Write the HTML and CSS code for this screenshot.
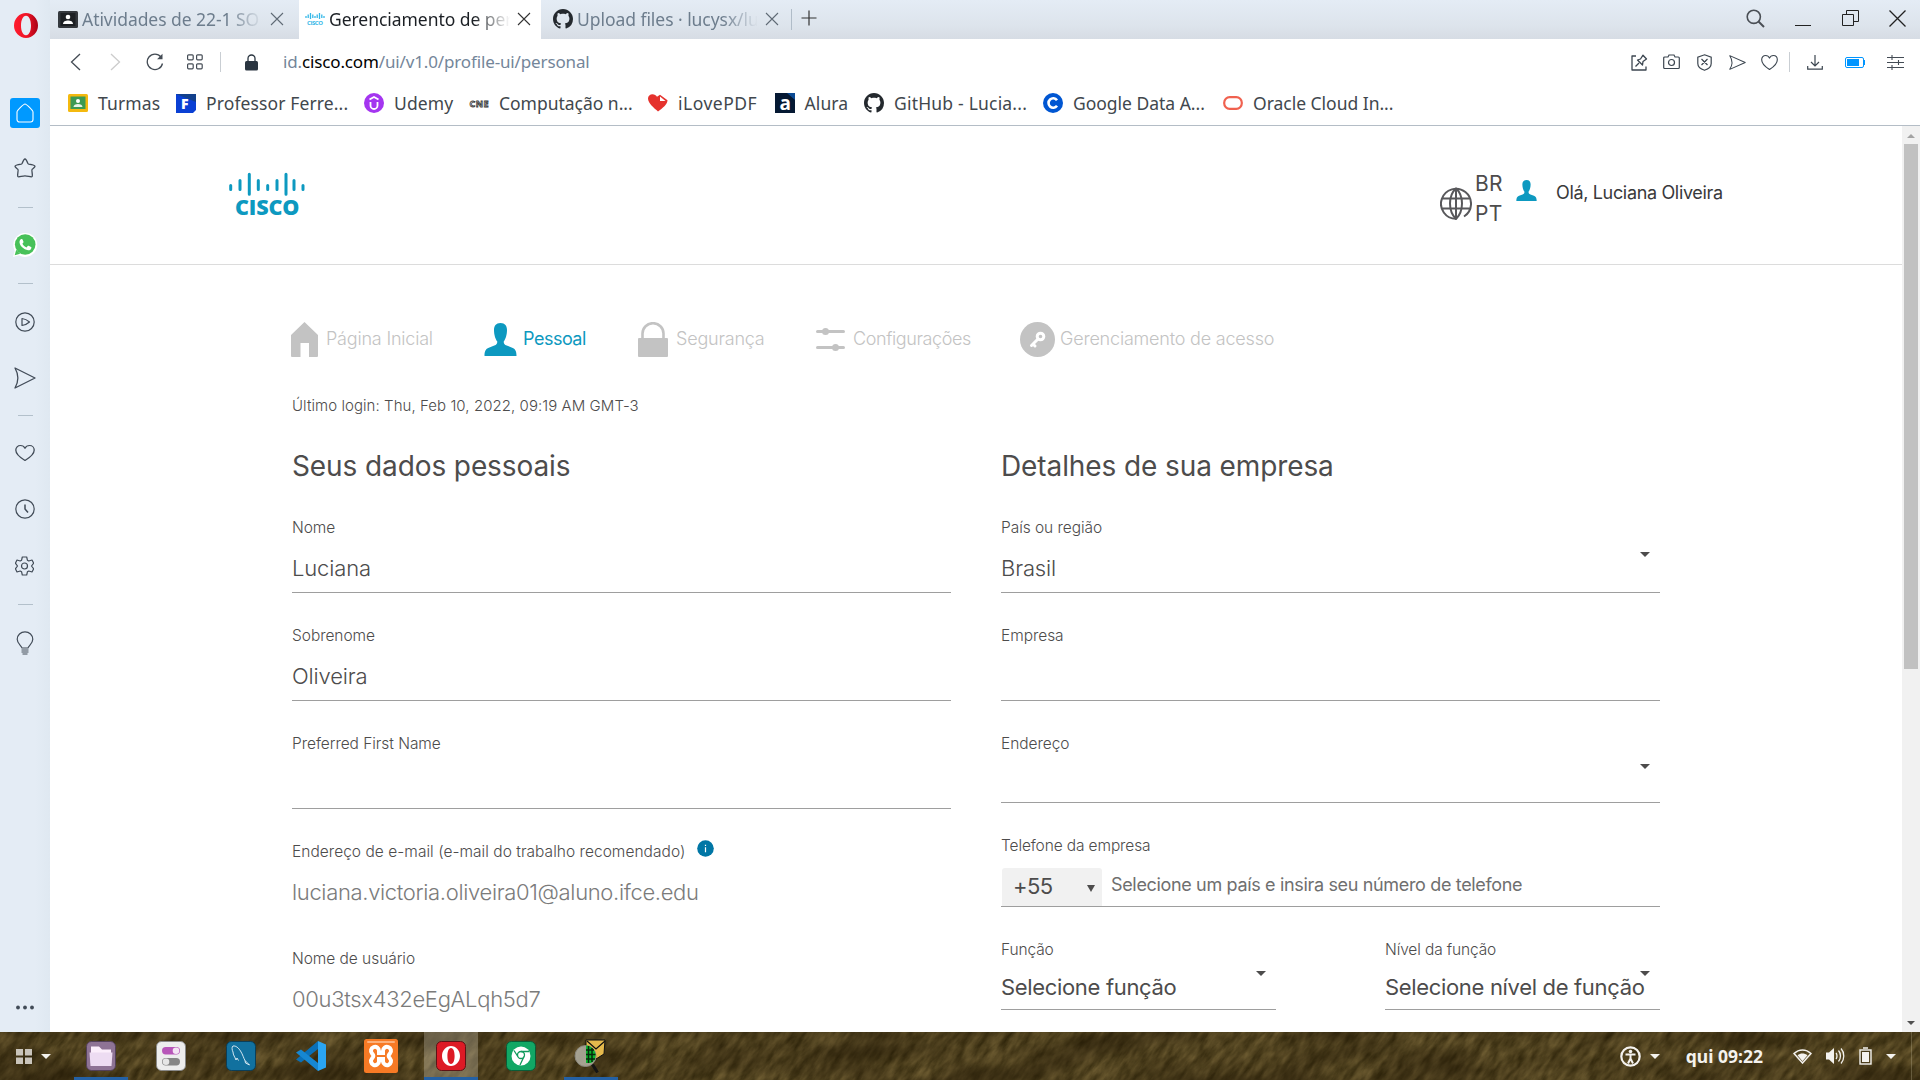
FILE: index.html
```html
<!DOCTYPE html>
<html lang="pt-BR">
<head>
<meta charset="utf-8">
<title>Gerenciamento de perfil</title>
<link rel="stylesheet" href="styles.css">
</head>
<body>
<svg class="defs" width="0" height="0">
  <defs>
    <symbol id="github" viewBox="0 0 16 16"><path d="M8 0C3.58 0 0 3.58 0 8c0 3.54 2.29 6.53 5.47 7.59.4.07.55-.17.55-.38 0-.19-.01-.82-.01-1.49-2.01.37-2.53-.49-2.69-.94-.09-.23-.48-.94-.82-1.13-.28-.15-.68-.52-.01-.53.63-.01 1.08.58 1.23.82.72 1.21 1.87.87 2.33.66.07-.52.28-.87.51-1.07-1.78-.2-3.64-.89-3.64-3.95 0-.87.31-1.59.82-2.15-.08-.2-.36-1.02.08-2.12 0 0 .67-.21 2.2.82.64-.18 1.32-.27 2-.27s1.36.09 2 .27c1.53-1.04 2.2-.82 2.2-.82.44 1.1.16 1.92.08 2.12.51.56.82 1.27.82 2.15 0 3.07-1.87 3.75-3.65 3.95.29.25.54.73.54 1.48 0 1.07-.01 1.93-.01 2.2 0 .21.15.46.55.38A8.01 8.01 0 0 0 16 8c0-4.42-3.58-8-8-8z" fill="#24292e"/></symbol>
    <symbol id="person" viewBox="0 0 32 33"><path d="M16 0c4.600 0 6.500 3.200 6.500 7 0 5-1.600 9.500-3.300 11.500 0 2.200.8 3.300 3 4.100l5.500 2.100c3 1.200 4.300 3.300 4.300 8.300H0c0-5 1.300-7.100 4.300-8.300l5.500-2.100c2.200-.8 3-1.900 3-4.100C11.100 16.500 9.500 12 9.500 7 9.500 3.200 11.400 0 16 0z" fill="#0d99c0"/></symbol>
    <symbol id="close" viewBox="0 0 14 14"><path d="M1 1l12 12M13 1L1 13" fill="none" stroke="currentColor" stroke-width="1.100"/></symbol>
    <symbol id="heart" viewBox="0 0 20 20"><path d="M10 18.200C6.500 16 .8 11.500.8 6.700.8 3.800 2.800 1.700 5.400 1.700c2 0 3.700 1 4.600 3.100.9-2.100 2.600-3.100 4.600-3.100 2.600 0 4.600 2.100 4.600 5 0 4.800-5.700 9.300-9.200 11.500z" fill="none" stroke="currentColor" stroke-width="1.300" stroke-linejoin="round"/></symbol>
    <symbol id="send" viewBox="0 0 22 22"><path d="M1 1l20 10L1 21c4-7 4-13 0-20z" fill="none" stroke="currentColor" stroke-width="1.300" stroke-linejoin="round"/></symbol>
    <symbol id="down" viewBox="0 0 10 5"><path d="M0 0h10L5 5z" fill="currentColor"/></symbol>
  </defs>
</svg>

<div class="window">
  <aside class="side">
    <svg class="opera" width="24" height="25" viewBox="0 0 24 25"><defs><linearGradient id="og" x1="0" x2="1"><stop offset="0" stop-color="#ff1b2d"/><stop offset=".55" stop-color="#ee1427"/><stop offset="1" stop-color="#a70014"/></linearGradient></defs><path fill="url(#og)" fill-rule="evenodd" d="M12 0a12 12.500 0 1 0 0 25a12 12.500 0 1 0 0-25zM12 2.700c3.200 0 5 4.600 5 9.800s-1.800 9.800-5 9.800-5-4.600-5-9.800 1.800-9.800 5-9.800z"/></svg>
    <div class="home"><svg width="18" height="20" viewBox="0 0 18 20"><path d="M9 1C7.600 1 1 7.500 1 9v7.500A2.500 2.500 0 0 0 3.500 19h11a2.500 2.500 0 0 0 2.500-2.500V9c0-1.500-6.600-8-8-8z" fill="none" stroke="#fff" stroke-width="1.100"/></svg></div>
    <div class="s-item s-25"><svg width="22" height="21" viewBox="0 0 22 21"><path d="M11 1c.9 0 1.500.8 2.800 4.300.2.500.5.700 1 .8C19 6.700 21 7.100 21 8.300c0 1.100-2.300 2.300-3 3.200-.6.700.9 5.500.2 7-.7 1.100-4.200-.6-7.200-.6s-6.500 1.700-7.200.6c-.7-1.500.8-6.300.2-7-.7-.9-3-2.100-3-3.200 0-1.200 2-1.600 6.200-2.200.5-.1.800-.3 1-.8C9.500 1.800 10.100 1 11 1z" fill="none" stroke="currentColor" stroke-width="1.300"/></svg></div>
    <hr class="s-24">
    <div class="s-item s-22"><svg width="26" height="26" viewBox="0 0 26 26"><path d="M1 25l1.700-6.300A12 12 0 1 1 7.200 23.300z" fill="#fff"/><circle cx="13.200" cy="12.500" r="10.300" fill="#47c159"/><path d="M2.700 23.300l1.500-5.600 4 4.100z" fill="#47c159"/><path d="M9.500 7c.5 0 .8 0 1 .5l1 2.300c.1.400 0 .7-.3 1l-.8.900c1 1.800 2.300 2.900 4.100 3.700l1.200-1.400c.3-.3.600-.3 1-.2l2.300 1.100c.4.200.5.500.4.900-.3 2-1.900 2.700-3.300 2.500-4.400-.7-8.300-4.500-8.600-8C7.400 8.600 8.500 7 9.500 7z" fill="#fff"/></svg></div>
    <hr class="s-23">
    <div class="s-item s-23"><svg width="20" height="20" viewBox="0 0 20 20" fill="none" stroke="currentColor" stroke-width="1.200"><circle cx="10" cy="10" r="9.200"/><path d="M7 6.500v7c2.500-.3 5-1.300 7.500-3.500C12 7.800 9.500 6.800 7 6.500z" stroke-linejoin="round"/></svg></div>
    <div class="s-item s-26"><svg width="22" height="22"><use href="#send"/></svg></div>
    <hr class="s-22">
    <div class="s-item s-22"><svg width="20" height="18" viewBox="0 0 20 20" preserveAspectRatio="none"><use href="#heart" width="20" height="20"/></svg></div>
    <div class="s-item s-26"><svg width="20" height="20" viewBox="0 0 20 20" fill="none" stroke="currentColor" stroke-width="1.200"><circle cx="10" cy="10" r="9.200"/><path d="M10 5.500V10l3 3.500" stroke-width="1.500"/></svg></div>
    <div class="s-item s-27"><svg width="19" height="20" viewBox="0 0 19 20" fill="none" stroke="currentColor" stroke-width="1.200"><circle cx="9.500" cy="10" r="3"/><path stroke-linejoin="round" d="M7.300 1h4.400l.7 3.200 1.400.8 3.200-1 1.700 3.200L16.500 10l2.200 2.800L17 16l-3.200-1-1.400.8-.7 3.200H7.300l-.7-3.200-1.400-.8L2 16 .4 12.800 2.500 10 .4 7.200 2 4l3.200 1 1.400-.8z"/></svg></div>
    <hr class="s-23">
    <div class="s-item s-23"><svg width="18" height="24" viewBox="0 0 18 24" fill="none" stroke="currentColor" stroke-width="1.200"><path d="M6 17c-.4-2.300-4.800-4.200-4.800-8.800a7.800 7.400 0 0 1 15.600 0c0 4.600-4.400 6.500-4.800 8.800z"/><path d="M5.500 19h7M5.500 21h7M6.500 23h5"/></svg></div>
    <svg class="dots" width="18" height="5" viewBox="0 0 18 5" fill="#414b57"><circle cx="2" cy="2.500" r="1.900"/><circle cx="9" cy="2.500" r="1.900"/><circle cx="16" cy="2.500" r="1.900"/></svg>
  </aside>

  <div class="browser">
    <div class="tabs">
      <div class="tab tab-first">
        <svg width="20" height="17" viewBox="0 0 20 17"><rect width="20" height="17" rx="1.500" fill="#34383d"/><rect x="2.500" y="2" width="15" height="13" fill="#1d2024"/><circle cx="10" cy="6" r="2.300" fill="#fff"/><path d="M5 13c0-2.500 2.500-3.500 5-3.500s5 1 5 3.500z" fill="#fff"/></svg>
        <span class="tab-text fade">Atividades de 22-1 SO 2022</span><svg class="x" width="14" height="14"><use href="#close"/></svg>
      </div>
      <div class="tab tab-active">
        <svg width="20" height="12" viewBox="0 0 20 12"><g stroke="#35b8e8" stroke-width="1.300"><path d="M1 3v2M3.200 1.500v3.500M5.500 0v6M7.800 1.500v3.500M10 3v2M12.200 1.500v3.500M14.500 0v6M16.800 1.500v3.500M19 3v2"/></g><text x="2" y="12" class="mini-cisco" textLength="16">CISCO</text></svg>
        <span class="tab-text fade">Gerenciamento de perfil</span><svg class="x" width="14" height="14"><use href="#close"/></svg>
      </div>
      <div class="tab tab-last">
        <svg width="20" height="20"><use href="#github"/></svg>
        <span class="tab-text fade">Upload files · lucysx/lucysx</span><svg class="x" width="14" height="14"><use href="#close"/></svg>
      </div>
      <span class="tab-sep"></span>
      <svg class="plus" width="16" height="16" viewBox="0 0 16 16"><path d="M8 .5v15M.5 8h15" stroke="#333" stroke-width="1.200"/></svg>
      <div class="win-ctl">
        <svg width="19" height="19" viewBox="0 0 19 19" fill="none" stroke="#4a4f55" stroke-width="1.600"><circle cx="7.800" cy="7.800" r="6.600"/><path d="M12.500 12.500l5.500 5.500" stroke-width="2"/></svg>
        <svg width="16" height="16" viewBox="0 0 16 16"><path d="M0 15.500h16" stroke="#222"/></svg>
        <svg width="17" height="17" viewBox="0 0 17 17" fill="none" stroke="#222"><path d="M.5 4.500h11v11H.5zM4.500 4.500v-4h12v11h-5"/></svg>
        <svg width="17" height="17" viewBox="0 0 17 17"><path d="M.5 .5l16 16M16.500 .5l-16 16" stroke="#222" stroke-width="1.300"/></svg>
      </div>
    </div>

    <div class="toolbar">
      <div class="cell40"><svg width="11" height="18" viewBox="0 0 11 18"><path d="M10 1L1.500 9l8.500 8" fill="none" stroke="#444c55" stroke-width="1.300"/></svg></div>
      <div class="cell40"><svg width="11" height="18" viewBox="0 0 11 18"><path d="M1 1l8.500 8L1 17" fill="none" stroke="#ccc" stroke-width="1.300"/></svg></div>
      <div class="cell40"><svg width="18" height="18" viewBox="0 0 18 18"><path d="M15 4A7.700 7.700 0 1 0 16.500 10.500" fill="none" stroke="#444c55" stroke-width="1.300"/><path d="M16.500 .8v5.400h-5.400z" fill="#444c55"/></svg></div>
      <div class="cell40"><svg width="16" height="16" viewBox="0 0 16 16" fill="none" stroke="#444c55" stroke-width="1.200"><rect x=".6" y=".8" width="5.600" height="5" rx="1"/><rect x="9.600" y=".8" width="5.600" height="5" rx="1"/><rect x=".6" y="9.800" width="5.600" height="5" rx="1"/><rect x="9.600" y="9.800" width="5.600" height="5" rx="1"/></svg></div>
      <span class="bar-sep"></span>
      <svg class="lock" width="13" height="17" viewBox="0 0 13 17"><rect y="7" width="13" height="9.500" rx="1.500" fill="#2a3540"/><path d="M3 8V4.500a3.500 3.500 0 0 1 7 0V8" fill="none" stroke="#2a3540" stroke-width="1.300"/></svg>
      <div class="url">id.<b>cisco.com</b>/ui/v1.0/profile-ui/personal</div>
      <div class="cell33"><svg width="17" height="17" viewBox="0 0 17 17" fill="none" stroke="currentColor" stroke-width="1.300"><path d="M5 2H1v14h14v-3.500M4.500 12.500L8 9M6.500 6l5 5 .5-3.500L15.500 5 12 1.200 9.500 5z" stroke-linejoin="round"/></svg></div>
      <div class="cell33"><svg width="17" height="16" viewBox="0 0 17 16" fill="none" stroke="currentColor" stroke-width="1.200"><path d="M1.700 3H5l1-2h5l1 2h3.300a1 1 0 0 1 1 1v9.500a1 1 0 0 1-1 1H1.700a1 1 0 0 1-1-1V4a1 1 0 0 1 1-1z"/><circle cx="8.500" cy="8.500" r="3"/></svg></div>
      <div class="cell33"><svg width="15" height="17" viewBox="0 0 15 17" fill="none" stroke="currentColor" stroke-width="1.200"><path d="M7.500.8l6.700 2.400v6.300c0 3.500-3.500 5.800-6.700 6.800C4.300 15.300.8 13 .8 9.500V3.200zM4.500 5l6 6M10.500 5l-6 6"/></svg></div>
      <div class="cell33"><svg width="17" height="15" viewBox="0 0 22 22" preserveAspectRatio="none"><use href="#send" width="22" height="22"/></svg></div>
      <div class="cell33"><svg width="17" height="17"><use href="#heart"/></svg></div>
      <span class="bar-sep2"></span>
      <div class="cell33 dl"><svg width="16" height="15" viewBox="0 0 16 15" fill="none" stroke="currentColor" stroke-width="1.200"><path d="M8 0v11M4 7l4 4 4-4M.7 11v3.200h14.600V11"/></svg></div>
      <div class="cell40 bat"><svg width="20" height="11" viewBox="0 0 20 11"><rect x=".5" y=".5" width="18" height="10" rx="1.500" fill="#fff" stroke="#0095ff"/><rect x="2" y="2" width="12" height="7" fill="#0095ff"/><rect x="18" y="3" width="2" height="5" fill="#0095ff"/></svg></div>
      <div class="cell40"><svg width="17" height="15" viewBox="0 0 17 15" stroke="#444c55" stroke-width="1.100"><path d="M0 2.500h17M0 7.500h17M0 12.500h17M5 0v5M11.500 5v5M5 10v5"/></svg></div>
    </div>

    <div class="bookmarks">
      <div class="bm"><svg width="20" height="18" viewBox="0 0 20 18"><rect width="20" height="18" rx="1.500" fill="#f4b90f"/><rect x="2.500" y="2.500" width="15" height="12.500" fill="#3c9a53"/><circle cx="10" cy="7" r="2" fill="#fff"/><path d="M5.500 13c0-2 2-3 4.500-3s4.500 1 4.500 3z" fill="#e6f3e8"/></svg>Turmas</div>
      <div class="bm"><svg width="20" height="19" viewBox="0 0 20 19"><path d="M0 0h20v16l-3 3H0z" fill="#0a40d4"/><path d="M0 0h20v8z" fill="#12408c"/><text x="5" y="15" class="f-logo">F</text></svg>Professor Ferre...</div>
      <div class="bm"><svg width="20" height="20" viewBox="0 0 20 20"><circle cx="10" cy="10" r="10" fill="#a435f0"/><path d="M6.500 9v3.500a3.500 3.500 0 0 0 7 0V9M5.500 6.500L10 4l4.500 2.500" fill="none" stroke="#fff" stroke-width="1.800"/></svg>Udemy</div>
      <div class="bm bm-tight"><svg width="20" height="10" viewBox="0 0 20 10"><text x="0.500" y="8.700" class="cne-logo" textLength="19">CNE</text></svg>Computação n...</div>
      <div class="bm bm-wide"><svg width="20" height="18" viewBox="0 0 20 18"><path d="M10 17.500C6 14 0 9 0 4.500 0 2 2 .3 4.500.3c2 0 3.500 1 4.500 2.500l3-2 7.500 5.500c0 4-5 8-9.500 11.200z" fill="#e5322d"/><path d="M12 2.500V7h5.500z" fill="#fff"/></svg>iLovePDF</div>
      <div class="bm"><svg width="20" height="20" viewBox="0 0 20 20"><rect width="20" height="20" fill="#051933"/><path d="M12 0h8v7z" fill="#0b4a94"/><text x="4.500" y="16.500" class="a-logo">a</text></svg>Alura</div>
      <div class="bm bm-git"><svg width="20" height="20"><use href="#github"/></svg>GitHub - Lucia...</div>
      <div class="bm bm-tight"><svg width="20" height="20" viewBox="0 0 20 20"><circle cx="10" cy="10" r="10" fill="#0056d2"/><path d="M14 7.200a4.700 4.700 0 1 0 0 5.600" fill="none" stroke="#fff" stroke-width="2.600"/></svg>Google Data A...</div>
      <div class="bm bm-tight"><svg width="20" height="14" viewBox="0 0 20 14"><rect x="1.200" y="1.200" width="17.600" height="11.600" rx="5.500" fill="none" stroke="#f0614f" stroke-width="2.200"/></svg>Oracle Cloud In...</div>
    </div>

    <div class="view">
      <main class="page">
        <header class="top">
          <svg class="cisco" width="78" height="46" viewBox="0 0 78 46"><g stroke="#0d99c0" stroke-width="3" stroke-linecap="round"><path d="M2.700 13.500v4M12 8.500v9M21.300 2.200v20M30.300 8.500v9M39.700 13.500v4M49 8.500v9M58 2.200v20M66 8.500v9M75 13.500v4"/></g><text x="7" y="43.300" class="cisco-name" textLength="64.500">CISCO</text></svg>
          <div class="lang"><svg width="32" height="33" viewBox="0 0 32 33" fill="none" stroke="#58585b" stroke-width="2"><path d="M24 29.500a15 15 0 1 0-8 2.300M2.500 11.500h27M2.500 21.500h27"/><path d="M16 32c-4-4-6-10-6-15.500S12 5 16 1.500c4 3.500 6 9.500 6 15S20 28 16 32zM16 1.500V32"/></svg><span>BR<br>PT</span></div>
          <svg class="me" width="21" height="21"><use href="#person"/></svg>
          <span class="hello">Olá, Luciana Oliveira</span>
        </header>
        <div class="body">
          <nav class="nav">
            <a><svg width="27" height="35" viewBox="0 0 27 35"><path d="M13.500 0L27 13v21a1 1 0 0 1-1 1h-8V21H9.500v14H1a1 1 0 0 1-1-1V13z" fill="#c3c3c3"/></svg><span>Página Inicial</span></a>
            <a class="on"><svg width="33" height="33"><use href="#person"/></svg><span>Pessoal</span></a>
            <a><svg width="30" height="35" viewBox="0 0 30 35"><rect y="16" width="30" height="19" rx="1" fill="#c3c3c3"/><path d="M4.500 17V11.500a10.500 10.300 0 0 1 21 0V17" fill="none" stroke="#c3c3c3" stroke-width="2.600"/></svg><span>Segurança</span></a>
            <a><svg width="29" height="23" viewBox="0 0 29 23"><path d="M1.500 3.500h26M1.500 19.500h26" stroke="#c3c3c3" stroke-width="3" stroke-linecap="round"/><circle cx="9.500" cy="3.500" r="3.500" fill="#c3c3c3"/><circle cx="19.500" cy="19.500" r="3.500" fill="#c3c3c3"/></svg><span class="cfg">Configurações</span></a>
            <a><svg width="35" height="35" viewBox="0 0 35 35"><circle cx="17.500" cy="17.500" r="17.500" fill="#c3c3c3"/><circle cx="20.500" cy="14.500" r="3.300" fill="none" stroke="#fff" stroke-width="3"/><path d="M17.500 17.500l-6 6M13 22l2 2" stroke="#fff" stroke-width="3" stroke-linecap="round"/></svg><span>Gerenciamento de acesso</span></a>
          </nav>
          <p class="login">Último login: Thu, Feb 10, 2022, 09:19 AM GMT-3</p>
          <div class="cols">
            <section class="col">
              <h2>Seus dados pessoais</h2>
              <div class="field"><label>Nome</label><div class="val">Luciana</div></div>
              <div class="field"><label>Sobrenome</label><div class="val">Oliveira</div></div>
              <div class="field"><label>Preferred First Name</label></div>
              <div class="field ro"><label class="mail-label">Endereço de e-mail (e-mail do trabalho recomendado)<svg width="17" height="17" viewBox="0 0 17 17"><circle cx="8.500" cy="8.500" r="8.300" fill="#0076a5"/><path d="M8.500 7.200v5M8.500 4.700v1.300" stroke="#fff" stroke-width="1.200"/></svg></label><div class="val mail">luciana.victoria.oliveira01@aluno.ifce.edu.br</div></div>
              <div class="field ro"><label>Nome de usuário</label><div class="val user">00u3tsx432eEgALqh5d7</div></div>
            </section>
            <section class="col">
              <h2>Detalhes de sua empresa</h2>
              <div class="field"><label>País ou região</label><div class="val">Brasil</div><svg class="caret" width="10" height="5"><use href="#down"/></svg></div>
              <div class="field"><label>Empresa</label></div>
              <div class="field addr"><label>Endereço</label><svg class="caret low" width="10" height="5"><use href="#down"/></svg></div>
              <div class="phone"><label>Telefone da empresa</label><div class="phone-row"><div class="ddi"><span>+55</span><svg width="8" height="7" viewBox="0 0 8 7"><path d="M0 0h8L4 7z" fill="#4d4c4c"/></svg></div><span class="ph">Selecione um país e insira seu número de telefone</span></div></div>
              <div class="pair">
                <div class="field sel"><label>Função</label><div class="val">Selecione função</div><svg class="caret up" width="10" height="5"><use href="#down"/></svg></div>
                <div class="field sel"><label>Nível da função</label><div class="val">Selecione nível de função</div><svg class="caret up" width="10" height="5"><use href="#down"/></svg></div>
              </div>
            </section>
          </div>
        </div>
      </main>
      <div class="scroll">
        <svg class="flip" width="8" height="4" viewBox="0 0 10 5"><use href="#down" width="10" height="5"/></svg>
        <div class="thumb"></div>
        <svg class="sc-down" width="8" height="4" viewBox="0 0 10 5"><use href="#down" width="10" height="5"/></svg>
      </div>
    </div>
  </div>
</div>

<footer class="task">
  <svg class="grass" width="1920" height="48"><filter id="gr" x="0" y="0" width="100%" height="100%" color-interpolation-filters="sRGB"><feTurbulence type="fractalNoise" baseFrequency=".12 .06" numOctaves="5" seed="8" result="fine"/><feColorMatrix in="fine" values=".32 0 0 0 .155  .28 0 0 0 .120  .2 0 0 0 .022  0 0 0 0 1" result="a"/><feTurbulence type="fractalNoise" baseFrequency=".01 .03" numOctaves="2" seed="3" result="big"/><feColorMatrix in="big" values="0 0 0 0 .13  0 0 0 0 .09  0 0 0 0 .02  1.200 0 0 0 -.45" result="b"/><feMerge><feMergeNode in="a"/><feMergeNode in="b"/></feMerge></filter><g transform="skewX(-30)"><rect x="-20" width="2000" height="48" filter="url(#gr)"/></g></svg>
  <svg class="apps" width="16" height="15" viewBox="0 0 16 15" fill="#c9c4bb"><path d="M0 0h7v6.500H0zM9 0h7v6.500H9zM0 8.500h7V15H0zM9 8.500h7V15H9z"/></svg>
  <svg class="apps-d" width="10" height="5"><use href="#down"/></svg>
  <div class="dock">
    <div class="app run"><svg width="30" height="30" viewBox="0 0 30 30"><rect x=".5" y=".5" width="29" height="29" rx="5" fill="#8e7395" stroke="#52405a"/><path d="M5 5.500h8l3 3h9V13H5z" fill="#fbeefb"/><path d="M3.500 11.500h23L25.500 25h-21z" fill="#eddcf2"/></svg></div>
    <div class="app"><svg width="30" height="30" viewBox="0 0 30 30"><rect x=".5" y=".5" width="29" height="29" rx="5" fill="#ededed" stroke="#888"/><rect x="6" y="6" width="18" height="7.500" rx="3.700" fill="#b756b8"/><circle cx="20" cy="9.700" r="3.300" fill="#f4e4f4"/><rect x="6" y="17" width="18" height="7.500" rx="3.700" fill="#868686"/><circle cx="10" cy="20.700" r="3.300" fill="#e6e6e6"/></svg></div>
    <div class="app"><svg width="30" height="30" viewBox="0 0 30 30"><rect x=".5" y=".5" width="29" height="29" rx="5" fill="#12719f" stroke="#0b3e58"/><path d="M10 19c-1-3-3-5-3-8C6 9 5.500 6 7 5c3-.5 5.500 2 7.500 5 2.500 4 3 7 4.500 9.500l4.500 4.500M10 19l1-2 1.500 2.500M19 19.500l.5 2.500 4 2" fill="none" stroke="#e6f2f8" stroke-width=".9"/></svg></div>
    <div class="app"><svg width="30" height="30" viewBox="0 0 30 30"><path d="M22 0v8L5 21.500 0 18.500z" fill="#0a70b8"/><path d="M22 30v-8L5 8.500 0 11.500z" fill="#1687d2"/><path d="M22 0l8 3.500v23L22 30z" fill="#2aa5f3"/></svg></div>
    <div class="app"><svg width="34" height="34" viewBox="0 0 34 34"><rect width="34" height="34" rx="2.500" fill="#f77a25"/><rect x="3" y="2" width="28" height="2" rx="1" fill="#fcb17c"/><path d="M8 14.500a4 4 0 1 1 7-2.500v2h4v-2a4 4 0 1 1 7 2.500c-2 2-2 3 0 5a4 4 0 1 1-7 3V20h-4v2.500a4 4 0 1 1-7-3c2-2 2-3 0-5z" fill="none" stroke="#fff" stroke-width="4"/></svg></div>
    <div class="app run cur"><svg width="30" height="30" viewBox="0 0 30 30"><rect x=".5" y=".5" width="29" height="29" rx="5" fill="#dd1a25" stroke="#5e1316"/><path fill-rule="evenodd" d="M15 5c5 0 9 4.500 9 10s-4 10-9 10-9-4.500-9-10 4-10 9-10zm0 2c-2.600 0-3.600 4-3.600 8s1 8 3.600 8 3.600-4 3.600-8-1-8-3.600-8z" fill="#fff"/></svg></div>
    <div class="app"><svg width="30" height="30" viewBox="0 0 30 30"><rect x=".5" y=".5" width="29" height="29" rx="5" fill="#12a765" stroke="#0a5c38"/><circle cx="15" cy="15" r="9.500" fill="#fff"/><g fill="none" stroke="#109a5c" stroke-width="1.300"><circle cx="15" cy="14" r="3.500"/><path d="M15 10.500h8M11.800 15.500L8 9.500M18 15.500l-4 8.500"/></g></svg></div>
    <div class="app run"><svg width="34" height="34" viewBox="0 0 34 34"><path d="M12 1h19l-1 14-8 5-10-5z" fill="#e5b94c" stroke="#111"/><path d="M13 2l9 8 9-8" fill="none" stroke="#111" stroke-width="1.300"/><circle cx="11.500" cy="17" r="10.500" fill="#b5b3a6" fill-opacity=".85" stroke="#8a887e"/><path d="M12 6.500c5 0 9.500 4.500 9.500 10 0 4-3 7-5 7.500h-4.500z" fill="#0cb52b"/><path d="M14.500 7v17M18 9v14M12 11h8M12 15.500h9.500M12 20h9" stroke="#06280c" stroke-width="1.500"/><path d="M18.500 25.500l5 8" stroke="#151515" stroke-width="3"/></svg></div>
  </div>
  <div class="tray">
    <svg class="acc" width="21" height="21" viewBox="0 0 21 21"><circle cx="10.500" cy="10.500" r="9.200" fill="none" stroke="#f4f2ee" stroke-width="2.200"/><circle cx="10.500" cy="5.500" r="1.800" fill="#f4f2ee"/><path d="M5.500 8.500h10M10.500 8.500v4.500M10.500 12.500l-2.500 5M10.500 12.500l2.500 5" stroke="#f4f2ee" stroke-width="2" fill="none"/></svg>
    <svg class="t-d" width="10" height="5"><use href="#down"/></svg>
    <span class="clock">qui 09:22</span>
    <svg class="wifi" width="19" height="15" viewBox="0 0 19 15"><path d="M1 4.500C6-.3 13-.3 18 4.500L9.500 14z" fill="none" stroke="#f4f2ee" stroke-width="1.500"/><path d="M4.500 6.200c3-2.200 7-2.200 10 0l-5 6z" fill="#f4f2ee"/></svg>
    <svg class="vol" width="19" height="18" viewBox="0 0 19 18"><path d="M0 5.500h3L8 1v16l-5-4.500H0z" fill="#f4f2ee"/><path d="M10 6c1.300 1.500 1.300 4.500 0 6M12.500 3.500c2.600 3 2.600 8 0 11M15 1.500c3.700 4 3.700 11 0 15" fill="none" stroke="#f4f2ee" stroke-width="1.300"/></svg>
    <svg class="pow" width="13" height="18" viewBox="0 0 13 18"><rect x="1" y="3" width="11" height="14" fill="none" stroke="#f4f2ee" stroke-width="1.400"/><rect x="3" y="5" width="7" height="10" fill="#f4f2ee"/><path d="M4 1h5" stroke="#f4f2ee" stroke-width="1.500"/></svg>
    <svg width="10" height="5"><use href="#down"/></svg>
    <span class="edge"></span>
  </div>
</footer>
</body>
</html>
```
FILE: styles.css
```css
* { box-sizing: border-box; }
body { margin: 0; width: 1920px; height: 1080px; overflow: hidden; display: flex; flex-direction: column; background: #fff; font-family: "Noto Sans", sans-serif; }
svg { display: block; flex: none; }
.defs { position: absolute; }
.window { display: flex; height: 1032px; flex: none; }

/* Opera side bar */
.side { width: 50px; flex: none; display: flex; flex-direction: column; align-items: center; padding: 13px 1px 22px 0; background: linear-gradient(90deg, #e4ecf5 70%, #dfe8f1); color: #414b57; }
.opera { margin-left: 2px; }
.home { width: 30px; height: 30px; margin: 60px 0 0 1px; border-radius: 3px; background: #0099ff; display: flex; align-items: center; justify-content: center; flex: none; }
.s-item { height: 30px; display: flex; align-items: center; flex: none; }
.side hr { width: 15px; height: 1px; border: 0; margin: 0 0 0 2px; background: #b3c0cb; flex: none; }
.side .s-22 { margin-top: 22px; }
.side .s-23 { margin-top: 23px; }
.side .s-24 { margin-top: 24px; }
.side .s-25 { margin-top: 25px; }
.side .s-26 { margin-top: 26px; }
.side .s-27 { margin-top: 27px; }
.dots { margin-top: auto; }

/* Tab strip */
.browser { width: 1870px; display: flex; flex-direction: column; }
.tabs { height: 39px; flex: none; display: flex; background: linear-gradient(#e4ecf5, #dde4ec 65%, #d6dce4); }
.tab { height: 39px; padding-bottom: 1px; display: flex; align-items: center; font-size: 17.500px; color: #6d7d8d; }
.tab-first { width: 249px; padding-left: 8px; }
.tab-active { width: 242px; padding-left: 6px; background: #fff; color: #1b1f24; }
.tab-last { width: 250px; padding-left: 12px; }
.tab-text { width: 181px; margin-left: 4px; line-height: 24px; white-space: nowrap; overflow: hidden; letter-spacing: -.05px; }
.fade { -webkit-mask-image: linear-gradient(90deg, #000 80%, transparent); mask-image: linear-gradient(90deg, #000 80%, transparent); }
.x { margin-left: 7px; color: #5f6a75; }
.tab-active .x { color: #333; }
.tab-sep { width: 1px; height: 21px; margin-top: 9px; background: #b0bcc8; }
.plus { margin: 10px 0 0 9px; }
.win-ctl { margin-left: auto; padding-right: 14px; height: 36px; display: flex; align-items: center; gap: 30.500px; }
.mini-cisco { font: 700 6px "Open Sans", sans-serif; fill: #35b8e8; }

/* Address bar */
.toolbar { height: 46px; flex: none; padding-left: 5px; display: flex; align-items: center; color: #3c4650; }
.cell40 { width: 40px; display: flex; justify-content: center; }
.cell33 { width: 32.700px; display: flex; justify-content: center; }
.bar-sep, .bar-sep2 { width: 1px; height: 20px; background: #c9ced3; }
.bar-sep { margin-left: 5px; }
.lock { margin: 0 25px 0 24px; }
.url { flex: 1; font-size: 17px; letter-spacing: -.14px; color: #74869a; line-height: 24px; }
.url b { font-weight: 400; color: #000; }
.bar-sep2 { margin-left: 3px; }
.dl { margin-left: 8px; }
.bat { margin-left: 4px; }
.toolbar .cell40:last-child { margin-right: 5px; }

/* Bookmarks */
.bookmarks { height: 41px; flex: none; padding: 0 0 4px 18px; display: grid; grid-template-columns: 108px 188px 105px 179px 126.500px 89.500px 179px 180px 1fr; align-items: center; border-bottom: 1px solid #b4bdc6; }
.bm { display: flex; align-items: center; gap: 10px; font-size: 17.500px; letter-spacing: .12px; line-height: 24px; color: #41474d; white-space: nowrap; }
.bm-tight { letter-spacing: -.02px; }
.bm-wide { letter-spacing: .5px; }
.bm-git { letter-spacing: .2px; }
.f-logo { font: 800 14px "Open Sans", sans-serif; fill: #fff; }
.cne-logo { font: 700 9px "Open Sans", sans-serif; fill: #fff; stroke: #333; stroke-width: .8px; }
.a-logo { font: 700 19px "Open Sans", sans-serif; fill: #fff; }

/* Web page */
.view { flex: 1; display: flex; overflow: hidden; font-family: Inter, sans-serif; color: #4d4c4c; font-weight: 300; }
.page { width: 1852px; overflow: hidden; }
.top { height: 139px; display: flex; border-bottom: 1px solid #dcdcdc; }
.cisco { margin: 46px 0 0 178px; }
.cisco-name { font: 800 21.500px "Open Sans", sans-serif; fill: #0d99c0; }
.lang { margin: 46px 0 0 1134px; display: flex; gap: 3px; font-size: 21px; line-height: 29.500px; font-weight: 400; letter-spacing: .3px; }
.lang svg { margin-top: 15px; }
.lang span { margin-top: -3px; width: 41px; }
.me { margin-top: 54px; }
.hello { margin: 54px 0 0 19px; font-size: 18px; line-height: 26px; font-weight: 400; letter-spacing: -.34px; color: #39393b; }
.body { padding: 57px 0 0 241px; }
.nav { height: 35px; display: grid; grid-template-columns: 193px 154px 178px 204px 1fr; align-items: center; font-size: 18px; color: #c3c3c3; letter-spacing: -.2px; }
.nav a { display: flex; align-items: center; gap: 8px; }
.nav span { line-height: 24px; padding-bottom: 2px; white-space: nowrap; }
.nav a:last-child { gap: 5px; }
.nav .on { color: #0d99c0; font-weight: 400; letter-spacing: -.5px; gap: 6px; }
.nav .cfg { letter-spacing: -.4px; }
.login { margin: 39px 0 32px 1px; font-size: 15px; line-height: 20px; letter-spacing: .06px; }
.cols { display: grid; grid-template-columns: 659px 659px; gap: 50px; padding-left: 1px; }
.col { display: flex; flex-direction: column; gap: 32px; }
h2 { margin: 0 0 1px; font-size: 28px; line-height: 36px; font-weight: 400; letter-spacing: -.1px; }
.field { height: 76px; flex: none; border-bottom: 1px solid #9e9e9e; position: relative; }
.ro { height: 74.500px; border-bottom-color: transparent; }
label { display: flex; font-size: 15.500px; line-height: 21px; letter-spacing: -.05px; white-space: nowrap; }
.mail-label { letter-spacing: .035px; }
.mail-label svg { margin: -1px 0 0 12px; }
.val { margin-top: 15px; font-size: 22px; line-height: 30px; letter-spacing: -.15px; white-space: nowrap; }
.ro .val { color: #7b7b7b; letter-spacing: -.31px; }
.ro .mail { width: 406px; overflow: hidden; letter-spacing: -.34px; }
.caret { position: absolute; right: 10px; top: 35px; }
.caret.low { top: 31px; }
.caret.up { top: 32px; }
.addr { height: 70px; }
.phone-row { margin-top: 12px; height: 39px; display: flex; align-items: center; border-bottom: 1px solid #9e9e9e; }
.ddi { width: 100px; height: 38px; margin-left: 1px; padding: 0 7px 0 11px; display: flex; align-items: center; justify-content: space-between; background: #f1f1f1; border-radius: 3px 3px 0 0; font-size: 22px; font-weight: 400; letter-spacing: -.6px; }
.ddi span { padding-bottom: 3px; }
.ddi svg { margin-top: 3px; }
.ph { margin-left: 9px; padding-bottom: 5px; font-size: 18px; letter-spacing: -.34px; color: #6f6f6f; font-weight: 400; }
.pair { display: flex; justify-content: space-between; }
.sel { width: 275px; height: 70.500px; }
.sel .val { margin-top: 12px; font-weight: 400; letter-spacing: -.33px; }
.sel label, .phone label { letter-spacing: -.12px; }

.scroll { width: 18px; background: #f1f1f1; display: flex; flex-direction: column; align-items: center; color: #a3a3a3; }
.scroll .flip { transform: scaleY(-1); margin: 8px 0 6px; }
.thumb { width: 14px; height: 525px; background: #c1c1c1; }
.sc-down { margin: auto 0 7px; color: #505050; }

/* Desktop panel */
.task { height: 48px; flex: none; position: relative; display: flex; align-items: center; overflow: hidden; background: #4f4120; color: #f4f2ee; }
.grass { position: absolute; left: 0; top: 0; }
.task > :not(.grass) { position: relative; }
.apps { margin-left: 16px; }
.apps-d { margin-left: 9px; }
.dock { margin-left: 23px; height: 48px; display: flex; gap: 16px; }
.app { width: 54px; height: 48px; display: flex; align-items: center; justify-content: center; }
.run { border-bottom: 3px solid #2461a5; padding-top: 3px; }
.cur { background-color: rgba(222, 216, 200, .3); }
.tray { margin-left: auto; padding-right: 8px; display: flex; align-items: center; }
.t-d { margin: 0 26px 0 9px; }
.clock { font-size: 17.500px; font-weight: 700; line-height: 24px; margin-right: 30px; }
.vol { margin: 0 14px; }
.pow { margin-right: 14px; }
.edge { width: 1px; height: 48px; margin-left: 15px; background: rgba(220, 210, 180, .25); }
```
